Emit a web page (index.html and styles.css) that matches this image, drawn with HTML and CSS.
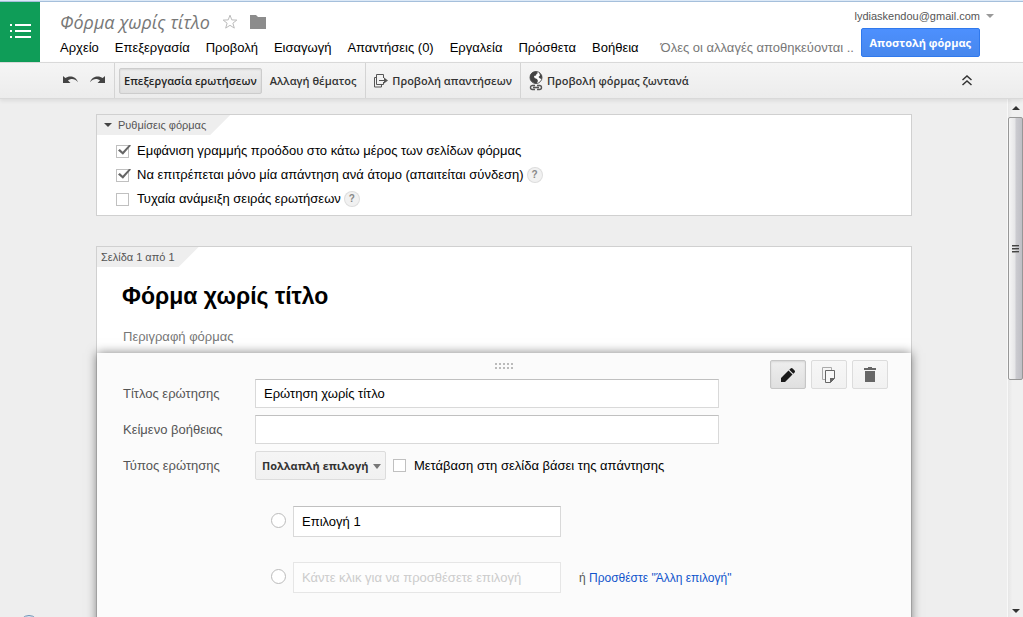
FILE: index.html
```html
<!DOCTYPE html>
<html lang="el">
<head>
<meta charset="utf-8">
<title>Φόρμα χωρίς τίτλο</title>
<link rel="stylesheet" href="styles.css">
</head>
<body>
<header class="header">
  <a class="logo" href="#" aria-label="Φόρμες">
    <svg width="22" height="16" viewBox="0 0 22 16" fill="#fff"><path d="M1 0h2v2H1zM6 0h16v2H6zM1 6h2v2H1zM6 6h16v2H6zM1 12h2v2H1zM6 12h16v2H6z"/></svg>
  </a>
  <div class="header-main">
    <div class="title-row">
      <h1 class="doc-title">Φόρμα χωρίς τίτλο</h1>
      <button class="icon-btn" aria-label="Αστέρι"><svg width="16" height="16" viewBox="0 0 16 16" fill="#fff" stroke="#bbb"><path d="M8 1.2l1.800 4.700 5 .2-3.900 3.100 1.400 4.900L8 11.300l-4.300 2.800 1.400-4.900-3.900-3.100 5-.2z"/></svg></button>
      <button class="icon-btn" aria-label="Φάκελος"><svg width="16" height="14" viewBox="0 0 16 14" fill="#8c8c8c"><path d="M0 0h6l2 2h8v12H0z"/></svg></button>
    </div>
    <nav class="menu">
      <button>Αρχείο</button><button>Επεξεργασία</button><button>Προβολή</button><button>Εισαγωγή</button><button>Απαντήσεις (0)</button><button>Εργαλεία</button><button>Πρόσθετα</button><button>Βοήθεια</button>
      <span class="save-state">Όλες οι αλλαγές αποθηκεύονται ..</span>
    </nav>
  </div>
  <div class="account">
    <button class="email">lydiaskendou@gmail.com<span class="caret"></span></button>
    <button class="send">Αποστολή φόρμας</button>
  </div>
</header>

<div class="toolbar">
  <div class="group history">
    <button class="icon-btn" aria-label="Αναίρεση"><svg width="16" height="9" viewBox="0 0 16 9" fill="#444"><path d="M0 0l2.300 2.100C6-.6 12.500-.3 15 6.200 12 2.600 8 2 5 4.500L7.500 7H0z"/></svg></button>
    <button class="icon-btn" aria-label="Επανάληψη"><svg width="16" height="9" viewBox="0 0 16 9" fill="#444"><path d="M16 0l-2.300 2.100C10-.6 3.500-.3 1 6.200 4 2.600 8 2 11 4.500L8.500 7H16z"/></svg></button>
  </div>
  <div class="group modes">
    <button class="tool active">Επεξεργασία ερωτήσεων</button>
    <button class="tool">Αλλαγή θέματος</button>
  </div>
  <div class="group">
    <button class="tool"><svg width="14" height="14" viewBox="0 0 14 14" fill="none" stroke="#555"><path d="M9.500 4V.5h-7v10h7V8M2.500 3.500h-2v9.500h7v-2"/><path d="M5 6.500h7"/><path d="M10 3.500l4 3-4 3z" fill="#555" stroke="none"/></svg>Προβολή απαντήσεων</button>
  </div>
  <div class="group">
    <button class="tool"><svg width="14" height="20" viewBox="0 0 14 20"><circle cx="7" cy="6.500" r="6" fill="#fff" stroke="#555"/><path d="M1 6c0-3 2-5.400 6-5.500L9 2 7.500 3 7 4.500 5 5l.5 2L8 8l1 2-1.500 2.400C3 12 1 9.500 1 6zM10 1l3 4-.2 3L11 7.500 9.500 6 11 4.500z" fill="#444"/><path d="M6 14.500H3.500a2 2 0 000 4H6M8 14.500h2.500a2 2 0 010 4H8M4 16.500h6" fill="none" stroke="#555" stroke-width="1.400"/></svg>Προβολή φόρμας ζωντανά</button>
  </div>
  <button class="icon-btn collapse" aria-label="Απόκρυψη μενού"><svg width="10" height="11" viewBox="0 0 10 11" fill="none" stroke="#333" stroke-width="1.500"><path d="M.5 5L5 1l4.500 4M.5 10L5 6l4.500 4"/></svg></button>
</div>

<div class="workspace">
  <main class="canvas">
    <section class="card settings">
      <h2 class="tab"><span class="caret dark"></span>Ρυθμίσεις φόρμας</h2>
      <div class="settings-list">
        <div class="check-row"><label><input type="checkbox" checked><span>Εμφάνιση γραμμής προόδου στο κάτω μέρος των σελίδων φόρμας</span></label></div>
        <div class="check-row"><label><input type="checkbox" checked><span>Να επιτρέπεται μόνο μία απάντηση ανά άτομο (απαιτείται σύνδεση)</span></label><button class="help">?</button></div>
        <div class="check-row"><label><input type="checkbox"><span>Τυχαία ανάμειξη σειράς ερωτήσεων</span></label><button class="help">?</button></div>
      </div>
    </section>

    <section class="card page">
      <div class="tab page-tab">Σελίδα 1 από 1</div>
      <h2 class="form-title">Φόρμα χωρίς τίτλο</h2>
      <p class="form-desc">Περιγραφή φόρμας</p>
      <div class="editor">
        <svg class="grip" width="18" height="6" viewBox="0 0 18 6" fill="#bbb"><path d="M0 0h2v2H0zM4 0h2v2H4zM8 0h2v2H8zM12 0h2v2h-2zM16 0h2v2h-2zM0 4h2v2H0zM4 4h2v2H4zM8 4h2v2H8zM12 4h2v2h-2zM16 4h2v2h-2z"/></svg>
        <div class="actions">
          <button class="action pressed" aria-label="Επεξεργασία"><svg width="14" height="14" viewBox="0 0 14 14" fill="#1a1a1a"><path d="M0 10l7.500-7.500 4 4L4 14H0zM8.300 1.700L9.600.4q1-.8 2 0l2 2q.8 1 0 2l-1.300 1.300z"/></svg></button>
          <button class="action" aria-label="Διπλότυπο"><svg width="14" height="16" viewBox="0 0 14 16" fill="none"><path d="M3.500 12.500h-3V.5h9v3" stroke="#aaa"/><path d="M3.500 3.500h9v8l-4 4h-5z" fill="#f8f8f8" stroke="#666"/><path d="M13 11H8v5z" fill="#666"/></svg></button>
          <button class="action" aria-label="Διαγραφή"><svg width="12" height="15" viewBox="0 0 12 15" fill="#666"><path d="M0 1h4V0h4v1h4v2H0zM1 4h10v11H1z"/></svg></button>
        </div>
        <div class="fields">
          <label for="q-title">Τίτλος ερώτησης</label>
          <input class="text" id="q-title" type="text" value="Ερώτηση χωρίς τίτλο">
          <label for="q-help">Κείμενο βοήθειας</label>
          <input class="text" id="q-help" type="text">
          <label for="q-type">Τύπος ερώτησης</label>
          <div class="type-row">
            <span class="select"><select id="q-type"><option>Πολλαπλή επιλογή</option></select></span>
            <label class="goto"><input type="checkbox"><span>Μετάβαση στη σελίδα βάσει της απάντησης</span></label>
          </div>
        </div>
        <div class="options">
          <div class="option"><input type="radio" name="opt" aria-label="Επιλογή 1"><input class="text" type="text" value="Επιλογή 1" aria-label="Κείμενο επιλογής"></div>
          <div class="option"><input type="radio" name="opt" aria-label="Νέα επιλογή"><input class="text ghost" type="text" placeholder="Κάντε κλικ για να προσθέσετε επιλογή" aria-label="Προσθήκη επιλογής"><span class="other">ή <a href="#">Προσθέστε "Άλλη επιλογή"</a></span></div>
        </div>
      </div>
    </section>
    <span class="status-bubble"></span>
  </main>
  <div class="scrollbar" aria-hidden="true">
    <span class="arrow up"></span>
    <span class="thumb"><i></i><i></i><i></i></span>
    <span class="arrow down"></span>
  </div>
</div>
</body>
</html>
```

FILE: styles.css
```css
* { box-sizing: border-box; }

body {
  margin: 0;
  height: 100vh;
  display: flex;
  flex-direction: column;
  overflow: hidden;
  border-top: 1px solid #dce9f7;
  background: #eee;
  color: #000;
  font: 13px/16px "Liberation Sans", Arial, sans-serif;
}

button, input, select { font: inherit; color: inherit; }
button { border: 0; padding: 0; background: none; white-space: nowrap; }
svg { display: block; flex: none; }
h1, h2, p { margin: 0; }

.icon-btn { display: flex; align-items: center; }

.caret {
  width: 0;
  height: 0;
  border: 4px solid transparent;
  border-top-color: #999;
  border-bottom: 0;
}
.caret.dark { border-top-color: #444; }

/* Header */
.header {
  flex: none;
  display: flex;
  border-top: 1px solid #a5bfdb;
  background: #fff;
}
.logo {
  width: 40px;
  height: 60px;
  display: flex;
  align-items: center;
  justify-content: center;
  background: #0f9d58;
}
.header-main { flex: 1; min-width: 0; padding: 8px 0 0 20px; }
.title-row { display: flex; align-items: center; gap: 12px; height: 24px; }
.doc-title {
  font: italic 18px/24px "Open Sans", sans-serif;
  color: #777;
}
.menu { display: flex; gap: 16px; margin-top: 6px; white-space: nowrap; }
.save-state { margin-left: 6px; color: #777; }
.account {
  flex: none;
  display: flex;
  flex-direction: column;
  align-items: flex-end;
  gap: 4px;
  padding: 6px 29px 0 0;
}
.email { display: flex; align-items: center; gap: 6px; font-size: 11px; color: #555; }
.send {
  height: 29px;
  margin-right: 14px;
  padding: 0 8px;
  border: 1px solid #3079ed;
  border-radius: 2px;
  background: linear-gradient(#4d90fe, #4787ed);
  color: #fff;
  font: bold 11px/16px "Open Sans", sans-serif;
}

/* Toolbar */
.toolbar {
  position: relative;
  z-index: 1;
  flex: none;
  display: flex;
  height: 37px;
  border-top: 1px solid #d9d9d9;
  border-bottom: 1px solid #d9d9d9;
  background: linear-gradient(#f5f5f5, #ececec);
  box-shadow: 0 2px 4px rgba(0, 0, 0, .08);
}
.group { display: flex; align-items: center; padding: 0 8px; border-left: 1px solid #d4d4d4; }
.history { gap: 10px; padding: 0 9px 0 63px; border-left: 0; }
.modes { gap: 3px; padding: 0 4px; }
.tool {
  display: flex;
  align-items: center;
  gap: 4px;
  height: 26px;
  color: #333;
  font: 600 11px/16px "Open Sans", sans-serif;
}
.modes .tool { padding: 0 4px; border: 1px solid transparent; }
.modes .active {
  border-color: #ccc;
  border-radius: 2px;
  background: linear-gradient(#eee, #e0e0e0);
  box-shadow: inset 0 1px 2px rgba(0, 0, 0, .1);
  color: #222;
}
.collapse { margin-left: auto; padding-right: 51px; }

/* Workspace */
.workspace { flex: 1; min-height: 0; display: flex; overflow: hidden; }
.canvas {
  position: relative;
  flex: 1;
  min-width: 0;
  display: flex;
  flex-direction: column;
  gap: 30px;
  padding: 15px 95px 0 96px;
  overflow: hidden;
}
.card { flex: none; border: 1px solid #d0d0d0; background: #fff; }

.tab {
  display: flex;
  align-items: center;
  gap: 6px;
  width: fit-content;
  height: 20px;
  padding: 0 24px 0 7px;
  background: #eee;
  clip-path: polygon(0 0, 100% 0, calc(100% - 20px) 100%, 0 100%);
  color: #555;
  font: 11px/20px "Liberation Sans", Arial, sans-serif;
}
.page-tab { padding-left: 4px; }

.settings-list { display: flex; flex-direction: column; gap: 8px; padding: 8px 18px; }
.check-row { display: flex; align-items: center; gap: 4px; height: 16px; }
.check-row label, .goto { display: flex; align-items: center; gap: 7px; }

input[type="checkbox"] {
  appearance: none;
  flex: none;
  width: 13px;
  height: 13px;
  margin: 1px;
  border: 1px solid #c0c0c0;
  background: #fff;
}
input[type="checkbox"]:checked { position: relative; }
input[type="checkbox"]:checked::after {
  content: "";
  position: absolute;
  left: 1px;
  top: -1px;
  width: 13px;
  height: 11px;
  background: #666;
  clip-path: polygon(0 54%, 14% 40%, 36% 66%, 88% 0, 100% 8%, 38% 94%);
}
.help {
  width: 14px;
  height: 14px;
  border-radius: 50%;
  background: #f1f1f1;
  box-shadow: 0 0 0 1px #ddd;
  color: #888;
  font: bold 10px/14px "Liberation Sans", Arial, sans-serif;
}

.form-title { padding: 16px 25px 0; font: bold 23px/26px "Liberation Sans", Arial, sans-serif; }
.form-desc { padding: 20px 26px 8px; color: #777; }

/* Question editor */
.editor {
  position: relative;
  min-height: 320px;
  padding: 26px 26px 0;
  background: #fbfbfb;
  box-shadow: 0 0 10px rgba(0, 0, 0, .5);
}
.grip { position: absolute; left: calc(50% - 9px); top: 10px; }
.actions { position: absolute; right: 23px; top: 7px; display: flex; gap: 5px; }
.action {
  display: flex;
  align-items: center;
  justify-content: center;
  width: 36px;
  height: 29px;
  border: 1px solid #dcdcdc;
  border-radius: 2px;
  background: linear-gradient(#f7f7f7, #f1f1f1);
}
.action.pressed {
  border-color: #c6c6c6;
  background: linear-gradient(#eee, #e0e0e0);
  box-shadow: inset 0 1px 2px rgba(0, 0, 0, .1);
}
.fields {
  display: grid;
  grid-template-columns: 124px 464px;
  gap: 7px 8px;
  align-items: center;
  color: #555;
}
.text {
  width: 100%;
  height: 29px;
  padding: 0 8px;
  border: 1px solid #d9d9d9;
  border-top-color: #c0c0c0;
  background: #fff;
  color: #000;
}
.type-row { display: flex; align-items: center; gap: 6px; }
.select { position: relative; }
.select::after {
  content: "";
  position: absolute;
  right: 5px;
  top: 13px;
  border: 4px solid transparent;
  border-top: 5px solid #777;
  border-bottom: 0;
}
select {
  appearance: none;
  width: 131px;
  height: 29px;
  padding: 0 6px;
  border: 1px solid #dcdcdc;
  border-radius: 2px;
  background: linear-gradient(#f5f5f5, #f1f1f1);
  color: #333;
  font: bold 11px/16px "Open Sans", sans-serif;
}
.goto { color: #000; white-space: nowrap; }

.options { display: flex; flex-direction: column; gap: 25px; padding: 26px 0 0 148px; }
.option { display: flex; align-items: center; gap: 7px; }
.option .text { width: 268px; height: 31px; }
.option .ghost { border-color: #e6e6e6; background: #fdfdfd; }
.ghost::placeholder { color: #ccc; opacity: 1; }
input[type="radio"] {
  appearance: none;
  flex: none;
  width: 15px;
  height: 15px;
  margin: 0 0 2px;
  border: 1px solid #bbb;
  border-radius: 50%;
  background: #fff;
}
.other { margin-left: 11px; font-size: 12px; color: #555; white-space: nowrap; }
.other a { color: #15c; text-decoration: none; }

.status-bubble {
  position: absolute;
  left: 19px;
  bottom: -18px;
  width: 20px;
  height: 20px;
  border: 1px solid #6f93b5;
  border-radius: 50%;
  background: #d9e7f4;
}

/* Scrollbar */
.scrollbar {
  flex: none;
  display: flex;
  flex-direction: column;
  align-items: center;
  width: 16px;
  border-left: 1px solid #f8f8f8;
  background: linear-gradient(90deg, #e6e6e6, #f0f0f0 30%);
}
.arrow { border: 4px solid transparent; }
.up { margin: 7px 0; border-top: 0; border-bottom-color: #333; }
.down { margin: auto 0 4px; border-bottom: 0; border-top-color: #333; }
.thumb {
  display: flex;
  flex-direction: column;
  align-items: center;
  justify-content: center;
  gap: 1px;
  width: 100%;
  height: 263px;
  border: 1px solid #979797;
  border-radius: 2px;
  background: linear-gradient(90deg, #f5f5f5, #e6e6e8 45%, #cbcbd0 55%, #bfbfc5);
}
.thumb i { width: 7px; height: 2px; border-top: 1px solid #444; border-bottom: 1px solid #999; }
```
